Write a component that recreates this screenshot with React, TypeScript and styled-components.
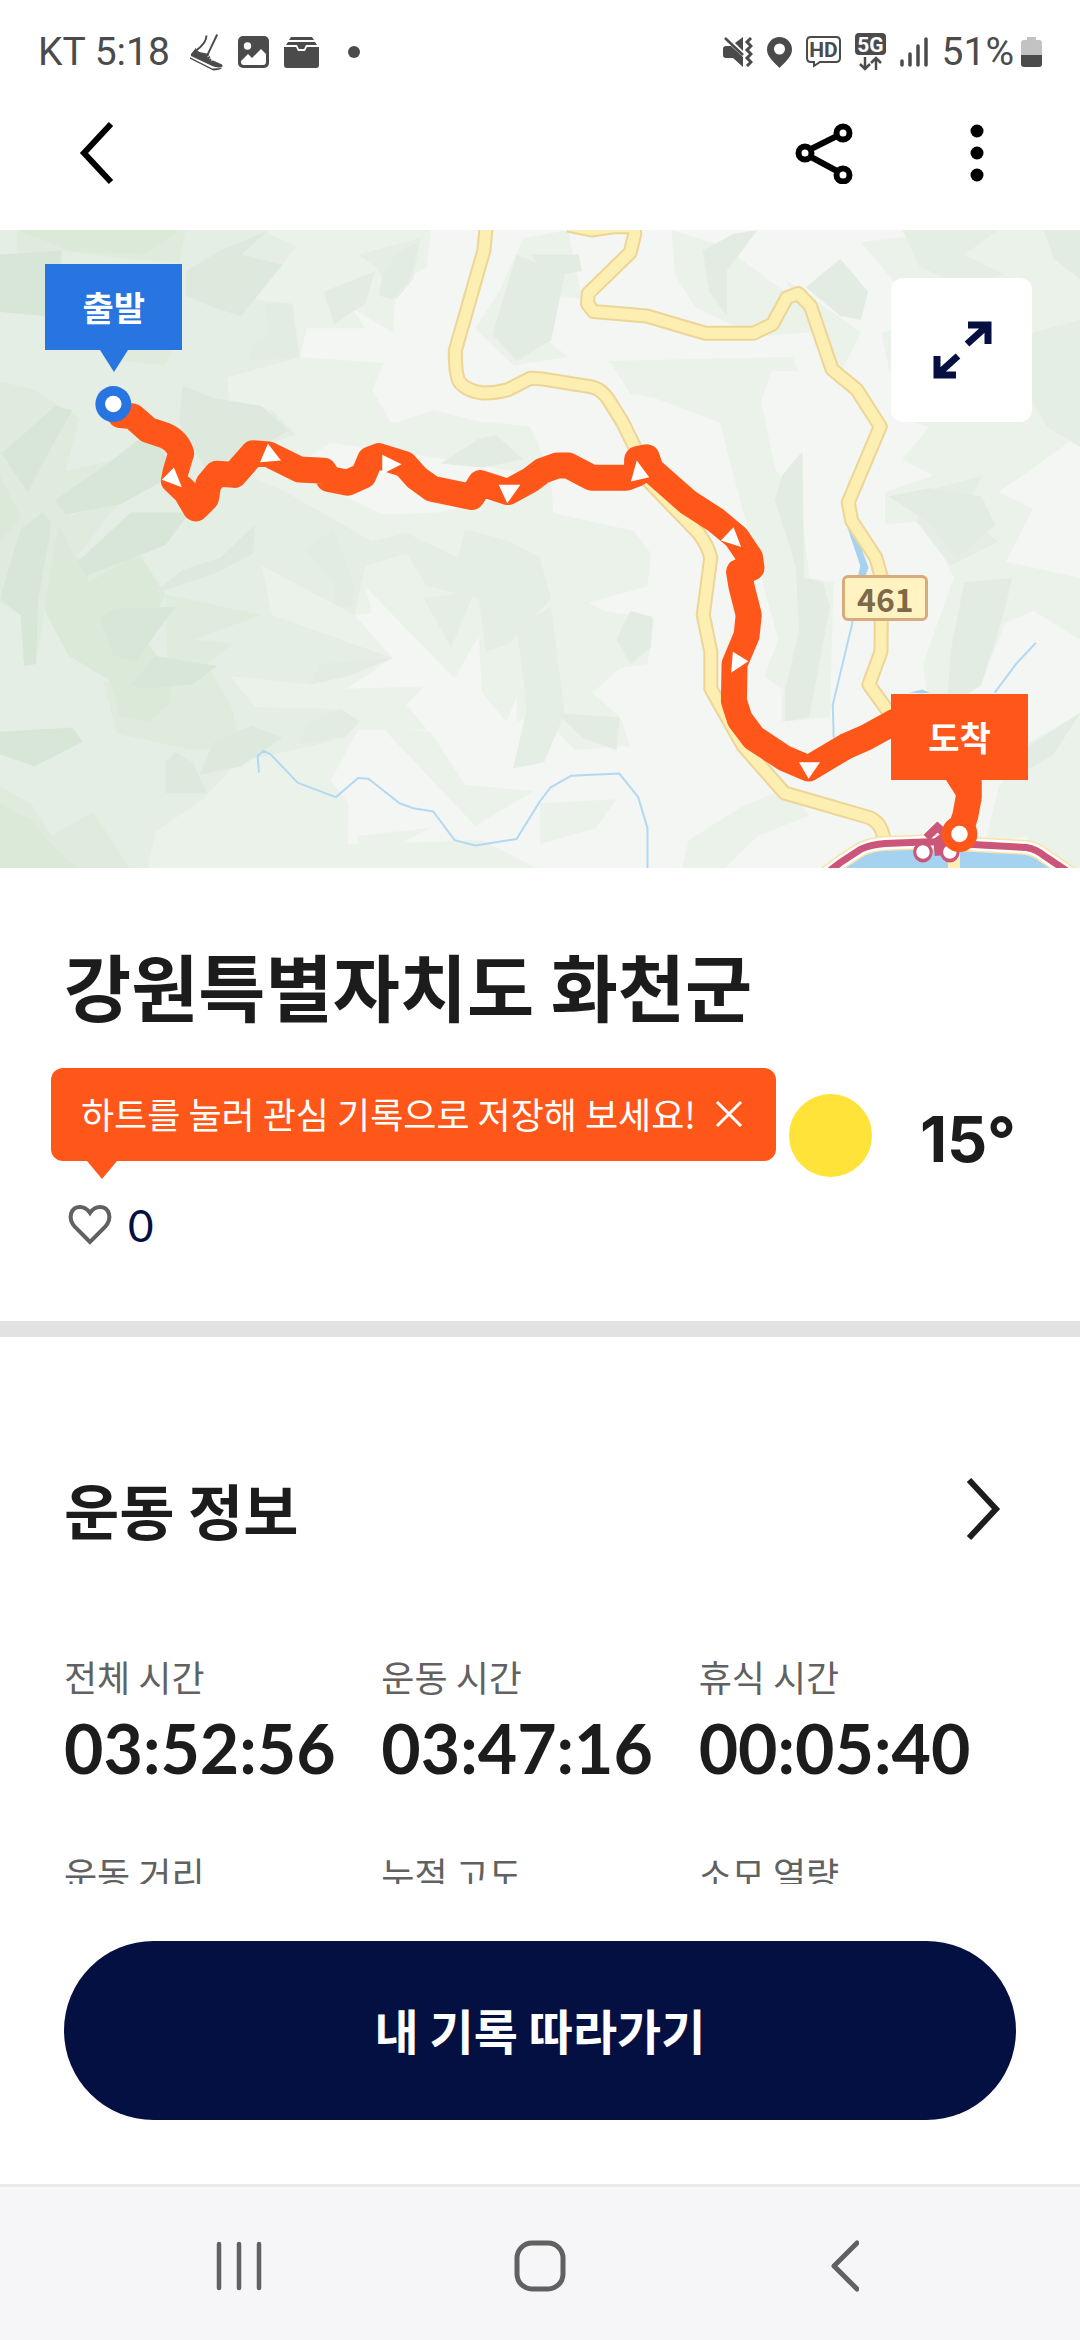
import React from "react";
import styled, { createGlobalStyle } from "styled-components";

const sans = `"Noto Sans CJK KR", "Noto Sans", sans-serif`;
const numeric = `Lato, "Noto Sans", sans-serif`;
const color = {
  ink: "#1c1c1c",
  navy: "#051042",
  grey: "#616161",
  status: "#4b4b4b",
  orange: "#ff571a",
  blue: "#2874e0",
  line: "#e2e2e2",
  trail: "#cb5679",
  lake: "#a6d2f2",
  road: "#fdeeb2",
};

const GlobalStyle = createGlobalStyle`
  * { box-sizing: border-box; }
  body { margin: 0; background: #fff; font-family: ${sans}; color: ${color.ink}; }
  h1, h2, dl, dt, dd, p { margin: 0; font-weight: inherit; }
  button { border: 0; padding: 0; background: none; font: inherit; color: inherit; cursor: pointer; }
  svg { display: block; }
`;

const Screen = styled.div`
  display: flex;
  flex-direction: column;
  height: 100vh;
  background: #fff;
`;

const StatusBar = styled.div`
  display: flex;
  justify-content: space-between;
  align-items: center;
  height: 104px;
  padding: 0 38px;
  flex: none;
  font-family: Roboto, sans-serif;
  font-size: 39px;
  color: ${color.status};
`;

const StatusGroup = styled.div<{ $gap: number }>`
  display: flex;
  align-items: center;
  gap: ${(p) => p.$gap}px;
`;

const AppBar = styled.header`
  display: flex;
  align-items: center;
  height: 126px;
  padding: 0 55px 28px 48px;
  flex: none;
`;

const IconButton = styled.button`
  display: flex;
  align-items: center;
  justify-content: center;
  width: 96px;
  height: 96px;
  flex: none;
`;

const AppBarActions = styled.div`
  display: flex;
  gap: 57px;
  margin-left: auto;
`;

const Content = styled.main`
  flex: 1;
  min-height: 0;
  overflow-y: auto;
  scrollbar-width: none;
`;

const MapArea = styled.section`
  position: relative;
  aspect-ratio: 1080 / 638;
  overflow: hidden;
`;

const MapDrawing = styled.svg`
  width: 100%;
  height: 100%;
  path, line { vector-effect: non-scaling-stroke; }
`;

const MapPin = styled.div<{ $x: number; $y: number; $tone: string }>`
  position: absolute;
  left: ${(p) => p.$x}%;
  top: ${(p) => p.$y}%;
  width: 137px;
  height: 86px;
  display: flex;
  align-items: center;
  justify-content: center;
  background: ${(p) => p.$tone};
  color: #fff;
  font-size: 34px;
  font-weight: 700;
  line-height: 48px;
  &::after {
    content: "";
    position: absolute;
    top: 100%;
    left: 50%;
    margin-left: -14px;
    border: 14px solid transparent;
    border-top: 22px solid ${(p) => p.$tone};
    border-bottom: 0;
  }
`;

const RoadSign = styled.div`
  position: absolute;
  left: 78%;
  top: 54%;
  width: 86px;
  height: 46px;
  display: flex;
  align-items: center;
  justify-content: center;
  border: 3px solid #d8ab7c;
  border-radius: 6px;
  background: #fff4c1;
  color: #80694b;
  font-size: 32px;
  font-weight: 700;
  line-height: 40px;
`;

const ExpandButton = styled.button`
  position: absolute;
  top: 48px;
  right: 48px;
  width: 141px;
  height: 144px;
  display: flex;
  align-items: center;
  justify-content: center;
  border-radius: 12px;
  background: #fff;
`;

const Summary = styled.section`
  padding: 68px 64px 64px;
  border-bottom: 16px solid ${color.line};
`;

const Title = styled.h1`
  font-size: 73px;
  font-weight: 700;
  line-height: 96px;
`;

const Weather = styled.div`
  display: flex;
  justify-content: flex-end;
  align-items: center;
  gap: 48px;
  height: 84px;
  margin-top: 61px;
`;

const Sun = styled.span`
  width: 83px;
  height: 83px;
  border-radius: 50%;
  background: #ffe338;
`;

const Temperature = styled.span`
  padding-top: 8px;
  font-family: Inter, sans-serif;
  font-size: 63px;
  font-weight: 700;
  line-height: 72px;
`;

const LikeRow = styled.div`
  position: relative;
  display: flex;
  height: 64px;
  margin-top: 16px;
`;

const LikeButton = styled.button`
  display: flex;
  align-items: center;
  gap: 14px;
  color: ${color.navy};
  font-family: ${numeric};
  font-size: 44px;
  line-height: 64px;
`;

const Tooltip = styled.div`
  position: absolute;
  left: -13px;
  bottom: 96px;
  display: flex;
  align-items: center;
  gap: 18px;
  height: 93px;
  padding: 0 32px 4px 30px;
  border-radius: 12px;
  background: ${color.orange};
  color: #fff;
  font-size: 36px;
  line-height: 48px;
  white-space: nowrap;
  &::after {
    content: "";
    position: absolute;
    top: 100%;
    left: 36px;
    border: 15px solid transparent;
    border-top: 18px solid ${color.orange};
    border-bottom: 0;
  }
`;

const Workout = styled.section`
  padding: 132px 64px 64px;
`;

const SectionHead = styled.div`
  display: flex;
  align-items: center;
  justify-content: space-between;
  height: 80px;
`;

const SectionTitle = styled.h2`
  font-size: 60px;
  font-weight: 700;
  line-height: 80px;
`;

const MoreButton = styled.button`
  width: 64px;
  height: 80px;
  display: flex;
  align-items: center;
  justify-content: center;
`;

const Stats = styled.dl`
  display: grid;
  grid-template-columns: repeat(3, 1fr);
  row-gap: 65px;
  margin-top: 103px;
`;

const Stat = styled.div`
  display: flex;
  flex-direction: column;
  gap: 12px;
  min-width: 0;
`;

const StatLabel = styled.dt`
  color: ${color.grey};
  font-size: 36px;
  line-height: 48px;
`;

const StatValue = styled.dd`
  font-family: ${numeric};
  font-size: 68px;
  font-weight: 700;
  line-height: 72px;
  white-space: nowrap;
`;

const Footer = styled.footer`
  flex: none;
  padding: 57px 64px 64px;
  background: #fff;
`;

const FollowButton = styled.button`
  width: 100%;
  height: 179px;
  padding-bottom: 4px;
  border-radius: 90px;
  background: ${color.navy};
  color: #fff;
  font-size: 48px;
  font-weight: 700;
  line-height: 64px;
`;

const SystemNav = styled.nav`
  display: flex;
  flex: none;
  height: 156px;
  padding: 4px 88px 0;
  border-top: 3px solid #eaeaea;
  background: #f6f6f8;
`;

const NavButton = styled.button`
  flex: 1;
  display: flex;
  align-items: center;
  justify-content: center;
`;

const Shoe = () => (
  <svg width="33" height="38" viewBox="0 0 34 38" fill={color.status}>
    <path d="M1 21 L6 15 Q8 20 15 20 L19 21 L22 27 L33 32 Q35 35 29 35 L24 34 L1 23 Z" />
    <path d="M0 24.500 L23 36 L33 35.500 Q31 38 24 38 L0 26 Z" />
    <path d="M17 2 C17 9 11 14 7 17 M28 1 L18 22" fill="none" stroke={color.status} strokeWidth="2" />
    <path d="M18 24 L21 22 M20 26 L23 24 M22 28 L25 26" stroke="#fff" strokeWidth="1" />
  </svg>
);

const Picture = () => (
  <svg width="31" height="32" viewBox="0 0 31 32">
    <rect width="31" height="32" rx="5" fill={color.status} />
    <circle cx="9.500" cy="10" r="3.700" fill="#fff" />
    <path d="M3 25 L10 18 L14 22 L23 13 L28 18 L28 26 Q28 29 25 29 L6 29 Q3 29 3 26 Z" fill="#fff" />
  </svg>
);

const Archive = () => (
  <svg width="35" height="31" viewBox="0 0 35 31" fill={color.status}>
    <path d="M7 0 H28 L30 3 H5 Z M4 5 H31 L33 8 H22 L20 12 H15 L13 8 H2 Z" />
    <path d="M0 10 H12 L14 14 H21 L23 10 H35 V28 Q35 31 32 31 H3 Q0 31 0 28 Z" />
  </svg>
);

const Mute = () => (
  <svg width="30" height="30" viewBox="0 0 30 30" fill={color.status}>
    <path d="M0 12 Q0 9 3 9 H8 L20 20 V30 L10 21 H3 Q0 21 0 18 Z M12 6 L20 0 V14 Z" />
    <path d="M2 1 L20 18" fill="none" stroke={color.status} strokeWidth="2.500" />
    <path d="M28 1 L24 5 L28 9 L24 13 L28 17 L24 21 L28 25 L24 29" fill="none" stroke={color.status} strokeWidth="3" />
  </svg>
);

const Pin = () => (
  <svg width="25" height="31" viewBox="0 0 25 31">
    <path fillRule="evenodd" fill={color.status} d="M12.500 0 A12.500 12.500 0 0 1 25 12.500 C25 20 18 25 12.500 31 C7 25 0 20 0 12.500 A12.500 12.500 0 0 1 12.500 0 Z M12.500 6.500 A5.500 5.500 0 1 0 12.500 17.500 A5.500 5.500 0 1 0 12.500 6.500 Z" />
  </svg>
);

const Hd = () => (
  <svg width="35" height="32" viewBox="0 0 35 32">
    <path d="M5 1 H30 Q34 1 34 5 V22 Q34 26 30 26 H14 L8 30 V26 H5 Q1 26 1 22 V5 Q1 1 5 1 Z" fill="none" stroke={color.status} strokeWidth="2" />
    <text x="17.500" y="21" textAnchor="middle" fontSize="21" fontWeight="700" fontFamily="Roboto" fill={color.status}>HD</text>
  </svg>
);

const FiveG = () => (
  <svg width="31" height="38" viewBox="0 0 31 38">
    <rect width="31" height="22" rx="4" fill={color.status} />
    <text x="15.500" y="18.500" textAnchor="middle" fontSize="21" fontWeight="700" fontFamily="Roboto" fill="#fff">5G</text>
    <path d="M10 24 V36 M5 31 L10 36 L15 31 M21 37 V25 M16 30 L21 25 L26 30" fill="none" stroke={color.status} strokeWidth="2.500" />
  </svg>
);

const Signal = () => (
  <svg width="28" height="30" viewBox="0 0 28 30">
    <path d="M2 24 V28 M10 17 V28 M18 9 V28 M26 2 V28" stroke={color.status} strokeWidth="3.500" strokeLinecap="round" />
  </svg>
);

const Battery = () => (
  <svg width="21" height="30" viewBox="0 0 21 30">
    <path d="M6 0 H15 V3 H18 Q21 3 21 6 V18 H0 V6 Q0 3 3 3 H6 Z" fill="#c2c2c2" />
    <path d="M0 18 H21 V27 Q21 30 18 30 H3 Q0 30 0 27 Z" fill={color.status} />
  </svg>
);

/* Relief shading, from the palest valley to the darkest ridge. */
const relief: [string, string[]][] = [
  ["#f3f6f2", [
    "M1250 0 L3136 0 L3136 1560 L1560 1560 L1400 1490 L1010 1500 L1012 1400 L960 1345 L1040 1220 L1240 1220 L1180 1160 L1230 1115 L1005 1120 L1140 1045 L1030 940 L1080 935 L1060 870 L1320 1095 L1390 990 L1400 1130 L1470 1200 L1520 1100 L1620 900 L1600 600 L1540 480 L1300 460 L1135 470 L1080 390 L1115 325 L870 310 L890 240 L1060 240 L1020 190 L1140 250 L1150 130 L1240 90 Z",
    "M830 590 L960 520 L1300 560 L1568 600 L1440 660 L1270 690 L1110 695 L1000 650 Z",
  ]],
  ["#ebf2ea", [
    "M860 0 L1240 0 L1240 90 L1150 130 L1140 250 L1020 180 L890 240 L870 310 L660 360 L670 320 L770 290 L640 240 L820 150 Z",
    "M1150 470 L1260 440 L1400 470 L1480 500 L1500 560 L1400 580 L1290 560 Z",
    "M1520 20 L1650 0 L1690 170 L1620 160 L1590 270 L1650 310 L1490 330 L1380 240 L1450 150 Z",
    "M1950 0 L2100 40 L2310 170 L2280 120 L2500 250 L2440 350 L2350 250 L2200 260 L2020 190 L1960 110 Z",
    "M1770 320 L2300 310 L2320 345 L2240 345 L2210 420 L2250 580 L2330 700 L2350 850 L2420 860 L2410 1190 L2270 1200 L2270 1120 L2220 1090 L2260 1000 L2140 630 L2090 470 L1900 410 L1830 400 Z",
    "M2500 30 L2800 0 L3136 0 L3136 500 L2900 640 L3000 680 L2920 810 L3136 850 L3136 1000 L3000 930 L2920 960 L2850 1100 L2700 1190 L2680 1060 L2770 850 L2690 710 L2570 720 L2570 640 L2710 600 L2620 560 L2700 480 L2610 460 L2560 250 L2700 230 Z",
    "M1440 700 L1600 690 L1840 735 L1890 790 L1880 870 L1710 910 L1750 930 L1900 950 L1880 1060 L1800 1070 L1720 1130 L1800 1190 L1830 1260 L1670 1270 L1568 1180 L1500 1200 L1500 960 Z",
    "M1568 1400 L1790 1390 L1730 1460 L1568 1500 Z M2000 1490 L2150 1410 L2290 1360 L2350 1430 L2200 1480 L2100 1563 L1980 1560 Z",
    "M3136 1180 L2990 1250 L2900 1360 L2860 1500 L2980 1480 L3040 1560 L3136 1560 Z",
    "M1040 1480 L1250 1460 L1160 1500 L1200 1563 L1040 1563 Z",
    "M1110 1215 L1250 1225 L1350 1355 L1550 1370 L1380 1455 Z",
  ]],
  ["#e5eee4", [
    "M0 0 L760 0 L860 40 L740 170 L850 180 L870 310 L660 360 L670 450 L790 440 L860 500 L720 540 L700 590 L830 640 L1080 760 L1180 740 L1330 800 L1350 730 L1480 760 L1568 800 L1600 900 L1480 1010 L1410 1030 L1390 900 L1240 870 L1180 790 L1060 820 L1030 940 L760 820 L790 940 L1140 1045 L900 1110 L670 1090 L740 1165 L990 1170 L1045 1200 L960 1250 L690 1300 L590 1390 L450 1470 L430 1563 L0 1563 Z",
    "M1040 60 L1220 20 L1200 120 L1150 170 L1090 90 Z",
    "M2620 0 L2900 0 L2800 60 L2920 110 L2780 130 L2670 90 Z",
    "M3000 250 L3136 220 L3136 530 L3040 480 L2970 380 Z",
    "M2720 630 L2850 600 L2800 700 L2900 760 L2760 820 L2660 710 Z",
    "M1380 880 L1310 1020 L1230 900 Z M1500 970 L1600 920 L1640 1180 L1580 1300 L1490 1315 L1530 1170 Z",
  ]],
  ["#dfebdd", [
    "M50 0 L540 0 L520 80 L360 70 L180 50 L180 110 L50 70 Z",
    "M0 370 L100 390 L230 460 L190 590 L340 560 L200 700 L370 640 L220 800 L400 780 L480 890 L420 1000 L500 1090 L490 1160 L430 1200 L350 1190 L290 1030 L200 1040 L130 930 L110 1030 L70 1060 L60 940 L0 910 Z",
    "M260 280 L380 250 L520 250 L480 330 L360 320 Z",
    "M480 890 L760 940 L560 1000 L680 1010 L600 1060 L670 1160 L700 1260 L560 1270 L340 1230 L300 1100 L490 1160 Z",
    "M0 1360 L90 1400 L150 1480 L270 1420 L380 1563 L0 1563 Z",
  ]],
  ["#dbead8", [
    "M0 600 L60 700 L0 760 Z M170 720 L260 860 L400 790 L480 890 L420 1000 L500 1090 L490 1160 L430 1200 L350 1190 L320 1100 L200 1040 L130 930 Z",
    "M50 0 L520 0 L420 60 L200 50 Z M0 1400 L90 1440 L150 1500 L230 1563 L0 1563 Z",
  ]],
  ["#d8e6d8", [
    "M0 60 L180 50 L170 110 L130 140 L130 210 L0 200 Z",
    "M0 550 L160 430 L210 440 L150 530 L80 640 L0 540 Z",
    "M60 730 L125 690 L150 715 L110 910 L105 1060 L70 1065 L60 940 L0 900 Z",
    "M290 950 L330 925 L510 920 L440 1000 L395 1055 L330 1040 Z",
    "M380 1110 L450 1040 L630 1065 L560 1110 L410 1120 Z",
    "M225 810 L380 690 L550 690 L480 770 L250 845 Z",
    "M160 660 L330 560 L450 480 L500 600 L350 670 L190 695 Z",
    "M0 1225 L210 1215 L240 1250 L100 1310 L0 1280 Z",
  ]],
  ["#dee9dd", [
    "M540 100 L640 50 L780 0 L700 60 L820 85 L700 210 L620 190 L540 160 Z",
    "M530 380 L620 410 L760 430 L840 490 L730 540 L600 590 L520 470 Z",
    "M440 890 L530 830 L640 800 L740 720 L735 790 L620 840 Z",
    "M480 1300 L510 1275 L560 1300 L600 1375 L480 1375 Z M580 1330 L620 1250 L730 1210 L820 1240 L700 1310 Z",
  ]],
  ["#e3ece3", [
    "M770 180 L845 180 L870 310 L720 320 L740 275 L780 260 Z",
    "M940 150 L1090 100 L1060 180 L970 230 Z M1110 110 L1150 60 L1220 25 L1190 120 L1140 170 L1100 160 Z",
    "M885 780 L970 730 L1030 870 L1025 920 L975 920 L970 860 Z",
    "M900 1110 L930 1060 L1140 1045 L1010 1090 Z M865 1255 L900 1200 L990 1170 L1045 1200 L1000 1240 Z",
    "M1280 570 L1390 510 L1440 500 L1520 560 L1400 580 Z",
    "M1430 255 L1500 60 L1640 110 L1600 270 L1500 320 Z",
    "M2040 50 L2130 10 L2200 0 L2110 100 L2110 210 L2060 150 Z M2340 140 L2440 70 L2520 150 L2500 220 L2440 210 Z",
    "M2270 600 L2330 540 L2335 850 L2390 860 L2410 920 L2350 1190 L2280 1200 L2280 1120 L2320 980 L2310 820 L2250 660 Z",
    "M1790 1000 L1830 930 L1895 945 L1890 1020 L1830 1060 Z M1620 1180 L1800 1190 L1790 1270 L1690 1240 Z",
    "M2800 860 L2940 850 L2910 950 L2850 1110 L2750 1170 L2760 1030 Z M2930 1290 L3136 1180 L3060 1280 L2960 1330 Z",
    "M2580 650 L2700 630 L2850 650 L2890 720 L2780 800 L2690 710 Z",
    "M1540 60 L1680 60 L1690 100 L1590 115 Z",
    "M3030 0 L3136 0 L3136 120 L3060 70 Z",
  ]],
];

const roads = [
  "M1412 -10 L1405 50 L1322 295 Q1322 350 1332 368 Q1350 392 1402 398 Q1440 398 1475 390 L1540 362 L1568 363 L1718 383 Q1745 388 1765 412 L1808 470 L1843 530 L1868 600 L2028 740 Q2055 770 2064 800 L2042 940 L2064 1030 L2064 1120 L2158 1260 L2278 1375 L2525 1435 Q2565 1450 2568 1500",
  "M1650 -12 L1718 0 L1780 -8 L1840 -8 L1843 10 L1830 55 L1708 155 L1706 180 L1723 199 L1878 210 L2048 252 L2188 252 L2243 230 L2285 165 L2318 155 L2353 185 L2416 340 L2488 390 L2556 480 L2463 665 L2473 710 L2543 800 L2560 850 L2558 1030 L2523 1110 L2600 1200",
];

const streams = [
  "M752 1325 L748 1285 L765 1272 L785 1280 L865 1350 L975 1385 L1040 1338 L1070 1340 L1160 1400 L1200 1412 L1258 1420 L1320 1490 L1380 1503 L1500 1487 L1568 1395 L1598 1362 L1658 1333 L1798 1327 L1853 1385 L1880 1460 L1880 1563",
  "M2474 860 L2475 960 L2418 1160 L2421 1240",
  "M3008 1008 L2950 1060 L2888 1130",
];

const shore =
  "M2385 1580 L2440 1545 L2500 1512 Q2530 1500 2570 1498 L2700 1494 L2850 1502 L2980 1508 Q3010 1512 3035 1530 L3110 1572";

const route =
  "M329 425 L350 452 L385 455 L430 488 L480 502 Q515 515 526 545 L510 590 L505 612 L540 640 L568 680 L598 655 L605 620 L630 595 L680 598 L735 545 L780 548 L870 585 L940 588 L955 608 L1010 617 L1055 600 L1075 560 L1100 552 L1175 572 L1210 605 L1255 632 L1370 652 L1395 618 L1475 640 L1540 610 L1575 588 L1618 575 L1650 575 L1718 605 L1818 605 L1850 595 L1850 560 L1878 555 L1890 585 L1998 665 L2078 708 L2138 750 L2178 800 L2182 825 L2146 835 L2153 870 L2174 940 L2168 990 L2133 1060 L2131 1150 L2148 1195 L2188 1240 L2278 1290 L2348 1315 L2458 1260 L2518 1238 L2600 1200 L2790 1300 L2813 1350 L2813 1385 L2803 1430 L2786 1475";

const arrows = [
  "M470 610 L505 580 L528 628 Z",
  "M778 522 L816 563 L755 567 Z",
  "M1110 549 L1166 572 L1110 596 Z",
  "M1448 622 L1511 622 L1473 667 Z",
  "M1849 563 L1885 604 L1832 614 Z",
  "M2093 758 L2130 726 L2152 774 Z",
  "M2128 1030 L2173 1053 L2123 1081 Z",
  "M2320 1300 L2381 1300 L2348 1340 Z",
];

function RouteMap() {
  return (
    <MapDrawing viewBox="0 0 3136 1558" preserveAspectRatio="none" role="img" aria-label="운동 경로 지도">
      <rect width="3136" height="1558" fill="#ebf2ea" />
      {relief.map(([fill, shapes]) => (
        <path key={fill} fill={fill} d={shapes.join(" ")} />
      ))}
      <path d="M2678 1131 L2640 1130 L2678 1122 L2700 1130 Z M2460 725 L2500 775 L2522 825 L2510 850 L2490 850 L2498 820 Z" fill={color.lake} />
      {streams.map((d) => (
        <path key={d} d={d} fill="none" stroke="#b2d8f4" strokeWidth="2" strokeLinejoin="round" />
      ))}
      {roads.map((d) => (
        <path key={d} d={d} fill="none" stroke="#edd596" strokeWidth="15" strokeLinejoin="round" />
      ))}
      {roads.map((d) => (
        <path key={d} d={d} fill="none" stroke={color.road} strokeWidth="11" strokeLinejoin="round" />
      ))}
      <path d={`${shore} Z`} fill={color.lake} />
      <path d="M2770 1490 V1570" stroke={color.road} strokeWidth="12" />
      <path d={shore} fill="none" stroke="#f8e3a8" strokeWidth="15" />
      <path d={shore} fill="none" stroke="#fff" strokeWidth="12" />
      <path d={shore} fill="none" stroke={color.trail} strokeWidth="7" />
      <path d="M2690 1484 L2722 1458 L2748 1478 L2722 1492 L2726 1528" fill="none" stroke={color.trail} strokeWidth="8" />
      <ellipse cx="2680" cy="1519" rx="24" ry="21" fill="#fff" stroke={color.trail} strokeWidth="9" />
      <ellipse cx="2758" cy="1519" rx="24" ry="21" fill="#fff" stroke={color.trail} strokeWidth="9" />
      <path d={route} fill="none" stroke={color.orange} strokeWidth="26" strokeLinejoin="round" strokeLinecap="round" />
      <path d={arrows.join(" ")} fill="#fff" />
      <ellipse cx="329" cy="425" rx="52" ry="44" fill={color.blue} />
      <ellipse cx="329" cy="425" rx="24" ry="20" fill="#fff" />
      <ellipse cx="2786" cy="1475" rx="52" ry="44" fill={color.orange} />
      <ellipse cx="2786" cy="1475" rx="24" ry="20" fill="#fff" />
    </MapDrawing>
  );
}

const stats = [
  { label: "전체 시간", value: "03:52:56" },
  { label: "운동 시간", value: "03:47:16" },
  { label: "휴식 시간", value: "00:05:40" },
  { label: "운동 거리" },
  { label: "누적 고도" },
  { label: "소모 열량" },
];

export default function App() {
  return (
    <>
      <GlobalStyle />
      <Screen>
        <StatusBar>
          <StatusGroup $gap={20}>
            <span>KT 5:18</span>
            <StatusGroup $gap={15}>
              <Shoe />
              <Picture />
              <Archive />
              <svg width="26" height="12" viewBox="0 0 26 12"><circle cx="20" cy="6" r="6" fill={color.status} /></svg>
            </StatusGroup>
          </StatusGroup>
          <StatusGroup $gap={14}>
            <Mute />
            <Pin />
            <Hd />
            <FiveG />
            <Signal />
            <StatusGroup $gap={7}>
              <span>51%</span>
              <Battery />
            </StatusGroup>
          </StatusGroup>
        </StatusBar>
        <AppBar>
          <IconButton aria-label="뒤로">
            <svg width="40" height="64" viewBox="0 0 40 64" fill="none" stroke="#000" strokeWidth="6">
              <path d="M35 3 L8 32 L35 61" />
            </svg>
          </IconButton>
          <AppBarActions>
            <IconButton aria-label="공유">
              <svg width="58" height="62" viewBox="0 0 58 62" fill="none" stroke="#000" strokeWidth="6">
                <path d="M16 27 L42 14 M16 35 L42 49" />
                <circle cx="10" cy="31" r="6.500" />
                <circle cx="48" cy="11" r="6.500" />
                <circle cx="48" cy="53" r="6.500" />
              </svg>
            </IconButton>
            <IconButton aria-label="더보기">
              <svg width="14" height="58" viewBox="0 0 14 58">
                <circle cx="7" cy="7" r="6.500" />
                <circle cx="7" cy="29" r="6.500" />
                <circle cx="7" cy="51" r="6.500" />
              </svg>
            </IconButton>
          </AppBarActions>
        </AppBar>
        <Content>
          <MapArea>
            <RouteMap />
            <RoadSign>461</RoadSign>
            <MapPin $x={4.2} $y={5.4} $tone={color.blue}>출발</MapPin>
            <MapPin $x={82.5} $y={72.7} $tone={color.orange}>도착</MapPin>
            <ExpandButton aria-label="지도 확대">
              <svg width="60" height="60" viewBox="0 0 60 60" fill="none" stroke={color.navy} strokeWidth="7">
                <path d="M36 5 H56 V24 M55 6 L35 24" />
                <path d="M5 36 V55 H24 M6 54 L26 36" />
              </svg>
            </ExpandButton>
          </MapArea>
          <Summary>
            <Title>강원특별자치도 화천군</Title>
            <Weather>
              <Sun role="img" aria-label="맑음" />
              <Temperature>15°</Temperature>
            </Weather>
            <LikeRow>
              <LikeButton aria-label="좋아요 0">
                <svg width="50" height="50" viewBox="0 0 50 50" fill="none" stroke={color.grey} strokeWidth="4">
                  <path d="M26 42 L11 27 C3 18 7 7 16 7 C21 7 24 10 26 13 C28 10 31 7 36 7 C45 7 49 18 41 27 Z" />
                </svg>
                <span>0</span>
              </LikeButton>
              <Tooltip role="status">
                <span>하트를 눌러 관심 기록으로 저장해 보세요!</span>
                <button aria-label="닫기">
                  <svg width="30" height="30" viewBox="0 0 30 30" stroke="#fff" strokeWidth="3">
                    <path d="M3 4 L27 28 M27 4 L3 28" />
                  </svg>
                </button>
              </Tooltip>
            </LikeRow>
          </Summary>
          <Workout>
            <SectionHead>
              <SectionTitle>운동 정보</SectionTitle>
              <MoreButton aria-label="운동 정보 더보기">
                <svg width="64" height="64" viewBox="0 0 64 64" fill="none" stroke={color.ink} strokeWidth="6">
                  <path d="M17 3 L44 32 L17 61" />
                </svg>
              </MoreButton>
            </SectionHead>
            <Stats>
              {stats.map((s) => (
                <Stat key={s.label}>
                  <StatLabel>{s.label}</StatLabel>
                  {s.value && <StatValue>{s.value}</StatValue>}
                </Stat>
              ))}
            </Stats>
          </Workout>
        </Content>
        <Footer>
          <FollowButton>내 기록 따라가기</FollowButton>
        </Footer>
        <SystemNav aria-label="시스템 탐색">
          <NavButton aria-label="최근 앱">
            <svg width="46" height="50" viewBox="0 0 46 50" stroke={color.grey} strokeWidth="4.500" strokeLinecap="round">
              <path d="M3 3 V47 M23 3 V47 M43 3 V47" />
            </svg>
          </NavButton>
          <NavButton aria-label="홈">
            <svg width="52" height="52" viewBox="0 0 52 52" fill="none" stroke={color.grey} strokeWidth="5">
              <rect x="3" y="3" width="46" height="46" rx="15" />
            </svg>
          </NavButton>
          <NavButton aria-label="이전">
            <svg width="36" height="52" viewBox="0 0 36 52" fill="none" stroke={color.grey} strokeWidth="5" strokeLinecap="round" strokeLinejoin="round">
              <path d="M34 3 L11 26 L34 49" />
            </svg>
          </NavButton>
        </SystemNav>
      </Screen>
    </>
  );
}
